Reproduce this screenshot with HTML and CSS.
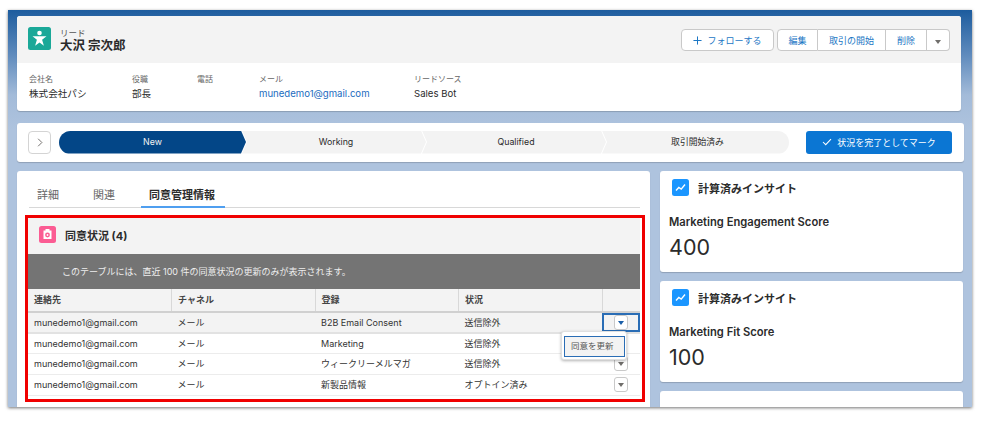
FILE: index.html
```html
<!DOCTYPE html>
<html lang="ja">
<head>
<meta charset="UTF-8">
<meta name="viewport" content="width=device-width, initial-scale=1.0">
<title>リード 大沢 宗次郎</title>
<link rel="stylesheet" href="styles.css">
</head>
<body>

<div class="window">

  <section class="card highlights">
    <div class="highlights-top">
      <div class="record">
        <svg class="record-icon" viewBox="0 0 23 23">
          <rect width="23" height="23" rx="2.5" fill="#1aa898"/>
          <circle cx="11.5" cy="6" r="2.3" fill="#fff"/>
          <path d="M4.5 9.2h14l-4.4 3.6 1.8 6-4.4-3.4-4.4 3.4 1.8-6z" fill="#fff"/>
        </svg>
        <div>
          <div class="record-type">リード</div>
          <div class="record-name">大沢 宗次郎</div>
        </div>
      </div>
      <div class="actions">
        <button type="button" class="btn btn-follow">
          <svg class="btn-plus" viewBox="0 0 10 10"><path d="M5 .5v9M.5 5h9" stroke="#1b76c4" stroke-width="1.1" fill="none"/></svg>
          フォローする
        </button>
        <div class="btn-group">
          <button type="button" class="btn btn-edit">編集</button>
          <button type="button" class="btn btn-convert">取引の開始</button>
          <button type="button" class="btn btn-delete">削除</button>
          <button type="button" class="btn btn-more"><span class="caret"></span></button>
        </div>
      </div>
    </div>
    <div class="fields">
      <div class="field field-company"><div class="field-label">会社名</div><div class="field-value">株式会社パシ</div></div>
      <div class="field field-title"><div class="field-label">役職</div><div class="field-value">部長</div></div>
      <div class="field field-phone"><div class="field-label">電話</div><div class="field-value"></div></div>
      <div class="field field-mail"><div class="field-label">メール</div><div class="field-value link">munedemo1@gmail.com</div></div>
      <div class="field"><div class="field-label">リードソース</div><div class="field-value">Sales Bot</div></div>
    </div>
  </section>

  <section class="card path-card">
    <button type="button" class="path-toggle">
      <svg viewBox="0 0 8 12" width="6" height="9"><path d="M1.5 1l5 5-5 5" stroke="#706e6b" stroke-width="1.3" fill="none"/></svg>
    </button>
    <div class="path">
      <div class="step step-current">New</div>
      <div class="step">Working</div>
      <div class="step">Qualified</div>
      <div class="step step-last">取引開始済み</div>
    </div>
    <button type="button" class="complete">
      <svg viewBox="0 0 12 10" width="10" height="8"><path d="M1 5l3.4 3.4L11 1.5" stroke="#fff" stroke-width="1.3" fill="none"/></svg>
      状況を完了としてマーク
    </button>
  </section>

  <div class="columns">
    <main class="card main-card">
      <div class="tabs">
        <a class="tab">詳細</a>
        <a class="tab">関連</a>
        <a class="tab tab-active">同意管理情報</a>
      </div>

      <div class="consent">
        <div class="consent-head">
          <svg class="consent-icon" viewBox="0 0 17 17">
            <rect width="17" height="17" rx="2.5" fill="#fb5c93"/>
            <path d="M4.5 4.5h8v8.5h-8z" fill="#fff"/>
            <path d="M6.5 3h4v2.5h-4z" fill="#fff"/>
            <circle cx="8.5" cy="9" r="2.4" fill="#fb5c93"/>
            <circle cx="8.5" cy="9" r="0.9" fill="#fff"/>
          </svg>
          <h2>同意状況 (4)</h2>
        </div>
        <div class="consent-note">このテーブルには、直近 100 件の同意状況の更新のみが表示されます。</div>
        <table class="consent-table">
          <thead>
            <tr><th>連絡先</th><th>チャネル</th><th>登録</th><th>状況</th><th></th></tr>
          </thead>
          <tbody>
            <tr class="row-active">
              <td>munedemo1@gmail.com</td><td>メール</td><td>B2B Email Consent</td><td>送信除外</td>
              <td class="cell-action cell-focus"><span class="row-btn"><span class="caret caret-blue"></span></span></td>
            </tr>
            <tr class="row-short">
              <td>munedemo1@gmail.com</td><td>メール</td><td>Marketing</td><td>送信除外</td>
              <td class="cell-action"></td>
            </tr>
            <tr>
              <td>munedemo1@gmail.com</td><td>メール</td><td>ウィークリーメルマガ</td><td>送信除外</td>
              <td class="cell-action"><span class="row-btn"><span class="caret"></span></span></td>
            </tr>
            <tr>
              <td>munedemo1@gmail.com</td><td>メール</td><td>新製品情報</td><td>オプトイン済み</td>
              <td class="cell-action"><span class="row-btn"><span class="caret"></span></span></td>
            </tr>
          </tbody>
        </table>
        <div class="row-menu"><div class="row-menu-item">同意を更新</div></div>
      </div>
    </main>

    <aside class="side">
      <div class="card insight">
        <div class="insight-head">
          <svg class="insight-icon" viewBox="0 0 17 17">
            <rect width="17" height="17" rx="2.5" fill="#1b96ff"/>
            <path d="M4 11.5l2.8-3 2.4 1.6L13 5.5" stroke="#fff" stroke-width="1.4" fill="none"/>
          </svg>
          <h3>計算済みインサイト</h3>
        </div>
        <div class="insight-label">Marketing Engagement Score</div>
        <div class="insight-value">400</div>
      </div>
      <div class="card insight">
        <div class="insight-head">
          <svg class="insight-icon" viewBox="0 0 17 17">
            <rect width="17" height="17" rx="2.5" fill="#1b96ff"/>
            <path d="M4 11.5l2.8-3 2.4 1.6L13 5.5" stroke="#fff" stroke-width="1.4" fill="none"/>
          </svg>
          <h3>計算済みインサイト</h3>
        </div>
        <div class="insight-label">Marketing Fit Score</div>
        <div class="insight-value">100</div>
      </div>
      <div class="card insight"></div>
    </aside>
  </div>

</div>

</body>
</html>
```

FILE: styles.css
```css
* {
  box-sizing: border-box;
}
body {
  margin: 0;
  padding: 10px 15px 18px 8px;
  background-color: #fff;
  font-family: Inter, "Noto Sans CJK JP", sans-serif;
  color: #2b2b2b;
}
h2, h3 {
  margin: 0;
}
button {
  font-family: inherit;
  padding: 0;
  cursor: pointer;
}
.window {
  height: 397px;
  padding: 6px 8px 0 9px;
  overflow: hidden;
  background: linear-gradient(#1d5c9e 0, #5f8bbd 45px, #a3bbd9 85px, #aec3de 120px);
  box-shadow: 0 1px 3px rgba(0, 0, 0, 0.55);
}
.card {
  background-color: #fff;
  border-radius: 3px;
  box-shadow: 0 1px 1px rgba(0, 0, 0, 0.18);
}

/* highlights */
.highlights {
  width: 944px;
  height: 95px;
  overflow: hidden;
}
.highlights-top {
  display: flex;
  justify-content: space-between;
  align-items: flex-start;
  height: 47px;
  padding: 11px 11px 0;
  background-color: #f3f3f3;
}
.record {
  display: flex;
  gap: 9px;
}
.record-icon {
  width: 23px;
  height: 23px;
}
.record-type {
  margin-top: 1px;
  font-size: 8.5px;
  line-height: 11px;
  color: #555;
}
.record-name {
  margin-top: -2px;
  font-size: 12.5px;
  line-height: 17px;
  font-weight: 700;
}
.actions {
  display: flex;
  gap: 3px;
  margin-top: 2px;
}
.btn {
  height: 22px;
  background-color: #fff;
  border: 1px solid #c9c9c9;
  font-size: 9px;
  color: #1b76c4;
}
.btn-follow {
  display: flex;
  align-items: center;
  justify-content: center;
  gap: 5px;
  width: 93px;
  border-radius: 4px;
}
.btn-plus {
  width: 9px;
  height: 9px;
}
.btn-group {
  display: flex;
}
.btn-group .btn {
  border-left: none;
}
.btn-edit {
  width: 41px;
  border-left: 1px solid #c9c9c9 !important;
  border-radius: 4px 0 0 4px;
}
.btn-convert {
  width: 68px;
}
.btn-delete {
  width: 41px;
}
.btn-more {
  width: 23px;
  border-radius: 0 4px 4px 0;
}
.caret {
  display: inline-block;
  border-left: 3.5px solid transparent;
  border-right: 3.5px solid transparent;
  border-top: 4px solid #706e6b;
}
.caret-blue {
  border-top-color: #1b5fa8;
}
.fields {
  display: flex;
  padding: 11px 12px 0;
}
.field-company {
  width: 103px;
}
.field-title {
  width: 65px;
}
.field-phone {
  width: 62px;
}
.field-mail {
  width: 155px;
}
.field-label {
  font-size: 8px;
  line-height: 11px;
  color: #666;
}
.field-value {
  margin-top: 2px;
  font-size: 9.6px;
  line-height: 13px;
}
.link {
  color: #1b6cc0;
}

/* path */
.path-card {
  display: flex;
  align-items: center;
  width: 947px;
  height: 39px;
  margin-top: 12px;
  padding: 0 12px 1px 11px;
}
.path-toggle {
  display: flex;
  align-items: center;
  justify-content: center;
  width: 23px;
  height: 23px;
  background-color: #fff;
  border: 1px solid #d4d4d4;
  border-radius: 4px;
}
.path {
  display: flex;
  width: 730px;
  height: 23px;
  margin-left: 8px;
  border-radius: 12px;
  overflow: hidden;
}
.step {
  flex: 0 0 184px;
  margin-left: -4px;
  padding-left: 4px;
  font-size: 8.8px;
  line-height: 22px;
  text-align: center;
  background-color: #f3f3f3;
  clip-path: polygon(0 0, calc(100% - 5px) 0, 100% 50%, calc(100% - 5px) 100%, 0 100%, 5px 50%);
}
.step-current {
  flex-basis: 187px;
  margin-left: 0;
  padding-left: 0;
  background-color: #034687;
  color: #f2f2f2;
  clip-path: polygon(0 0, calc(100% - 5px) 0, 100% 50%, calc(100% - 5px) 100%, 0 100%);
}
.step-last {
  flex: 1;
  clip-path: polygon(0 0, 100% 0, 100% 100%, 0 100%, 5px 50%);
}
.complete {
  display: flex;
  align-items: center;
  justify-content: center;
  gap: 5px;
  width: 146px;
  height: 23px;
  margin-left: 17px;
  background-color: #0b76d3;
  border: none;
  border-radius: 3px;
  color: #fff;
  font-size: 9px;
}

/* lower columns */
.columns {
  display: flex;
  gap: 10px;
  margin-top: 9px;
}
.main-card {
  width: 633px;
  height: 240px;
  padding: 8px 6px 0 8px;
}
.tabs {
  display: flex;
  height: 29px;
  padding-left: 8px;
  margin: 0 4px 0 4px;
  border-bottom: 1px solid #d8d8d8;
}
.tab {
  margin-right: 34px;
  padding-top: 2px;
  font-size: 11px;
  line-height: 28px;
  color: #666;
}
.tab-active {
  height: 29px;
  padding: 2px 10px 0 8px;
  margin: 0 0 0 -8px;
  font-weight: 700;
  color: #2b2b2b;
  border-bottom: 2px solid #4f9ff0;
}

/* consent box */
.consent {
  position: relative;
  width: 620px;
  height: 187px;
  margin-top: 7px;
  padding-right: 2px;
  border: 3px solid #f00000;
}
.consent-head {
  display: flex;
  align-items: center;
  gap: 9px;
  height: 36px;
  padding: 0 0 3px 11px;
  background-color: #f3f3f3;
}
.consent-icon {
  width: 17px;
  height: 17px;
}
.consent-head h2 {
  font-size: 11px;
  font-weight: 700;
}
.consent-note {
  height: 35px;
  padding-left: 34px;
  font-size: 9px;
  line-height: 36px;
  color: #eee;
  background-color: #747474;
}
.consent-table {
  width: 100%;
  border-collapse: collapse;
  table-layout: fixed;
  font-size: 9px;
}
.consent-table th {
  height: 23px;
  padding: 0 6px 2px;
  text-align: left;
  font-weight: 600;
  color: #444;
  background-color: #f3f3f3;
  border-bottom: 2px solid #d0d0d0;
  border-right: 1px solid #d8d8d8;
  width: 143.5px;
}
.consent-table th:last-child {
  width: auto;
  border-right: none;
}
.consent-table td {
  height: 21px;
  padding: 0 6px;
  border-bottom: 1px solid #ececec;
  color: #333;
}
.row-short td {
  height: 20px;
}
.row-active td {
  background-color: #f3f3f3;
  border-bottom: 2px solid #e2e2e2;
}
.consent-table .cell-action {
  padding: 0;
  text-align: center;
}
.consent-table .cell-focus {
  box-shadow: inset 0 0 0 2px #2a6db5;
}
.row-btn {
  display: inline-flex;
  align-items: center;
  justify-content: center;
  width: 14px;
  height: 15px;
  vertical-align: middle;
  background-color: #fff;
  border: 1px solid #c9c9c9;
  border-radius: 3px;
}
.row-menu {
  position: absolute;
  top: 113px;
  right: 15px;
  width: 66px;
  height: 29px;
  padding: 4px 1px 0 2px;
  background-color: #fff;
  border: 1px solid #e0e0e0;
  border-radius: 3px;
  box-shadow: 0 1px 3px rgba(0, 0, 0, 0.3);
}
.row-menu-item {
  height: 21px;
  padding-left: 6px;
  font-size: 8.5px;
  line-height: 18px;
  color: #555;
  background-color: #f3f3f3;
  border: 1.5px solid #2a6db5;
}

/* right column */
.side {
  width: 303px;
  display: flex;
  flex-direction: column;
  gap: 9px;
}
.insight {
  flex: 0 0 101px;
  padding: 8px 9px 0;
}
.insight-head {
  display: flex;
  align-items: center;
  gap: 9px;
  padding-left: 3px;
}
.insight-icon {
  width: 17px;
  height: 17px;
}
.insight-head h3 {
  font-size: 11px;
  font-weight: 600;
}
.insight-label {
  margin-top: 19px;
  font-size: 11.2px;
  line-height: 14px;
  font-weight: 600;
}
.insight-value {
  margin-top: 4px;
  font-size: 21.5px;
  line-height: 28px;
}
```
